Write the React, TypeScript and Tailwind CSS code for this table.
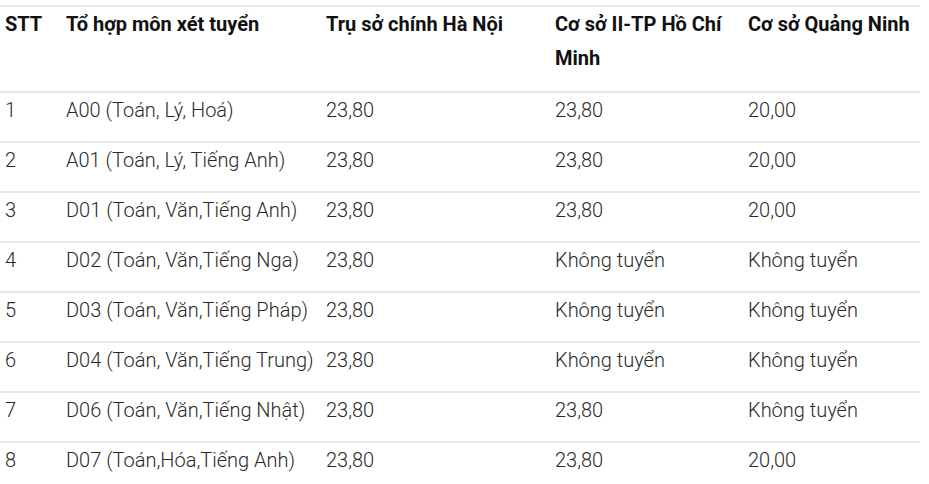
import React from "react";

const rows: [string, string, string, string, string][] = [
  ["1", "A00 (Toán, Lý, Hoá)", "23,80", "23,80", "20,00"],
  ["2", "A01 (Toán, Lý, Tiếng Anh)", "23,80", "23,80", "20,00"],
  ["3", "D01 (Toán, Văn,Tiếng Anh)", "23,80", "23,80", "20,00"],
  ["4", "D02 (Toán, Văn,Tiếng Nga)", "23,80", "Không tuyển", "Không tuyển"],
  ["5", "D03 (Toán, Văn,Tiếng Pháp)", "23,80", "Không tuyển", "Không tuyển"],
  ["6", "D04 (Toán, Văn,Tiếng Trung)", "23,80", "Không tuyển", "Không tuyển"],
  ["7", "D06 (Toán, Văn,Tiếng Nhật)", "23,80", "23,80", "Không tuyển"],
  ["8", "D07 (Toán,Hóa,Tiếng Anh)", "23,80", "23,80", "20,00"],
];

const headers = ["STT", "Tổ hợp môn xét tuyển", "Trụ sở chính Hà Nội", "Cơ sở II-TP Hồ Chí Minh", "Cơ sở Quảng Ninh"];

export default function App() {
  return (
    <div className="bg-white w-[929px] h-[484px] overflow-hidden pt-[5px]" style={{ fontFamily: "Roboto, 'Liberation Sans', sans-serif" }}>
      <table className="table-fixed w-[920px] border-collapse">
        <colgroup>
          <col className="w-[61px]" />
          <col className="w-[260px]" />
          <col className="w-[229px]" />
          <col className="w-[193px]" />
          <col className="w-[177px]" />
        </colgroup>
        <thead>
          <tr className="border-t-2 border-[#e8e8e8]">
            {headers.map((h) => (
              <th key={h} className="text-left align-top px-[5px] pt-0 pb-[16px] text-[20px] leading-[34px] font-bold text-[#111]">
                {h}
              </th>
            ))}
          </tr>
        </thead>
        <tbody>
          {rows.map((r) => (
            <tr key={r[0]} className="border-t-2 border-[#e8e8e8]">
              {r.map((c, i) => (
                <td key={i} className="align-top px-[5px] pt-0 pb-[14px] text-[20px] leading-[34px] font-light text-[#2a2a2a] whitespace-nowrap">
                  {c}
                </td>
              ))}
            </tr>
          ))}
        </tbody>
      </table>
    </div>
  );
}
